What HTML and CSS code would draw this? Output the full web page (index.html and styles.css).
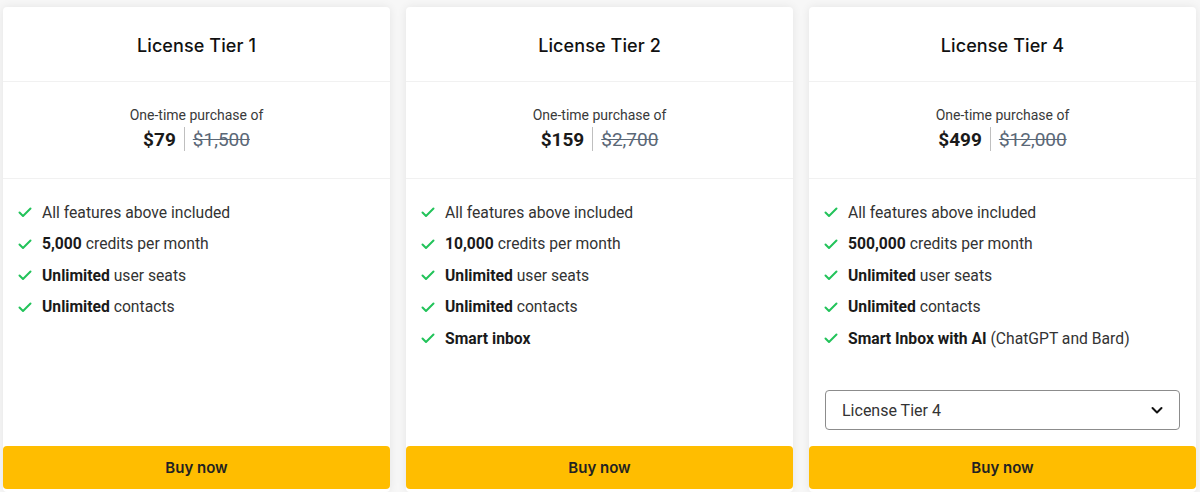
FILE: index.html
```html
<!DOCTYPE html>
<html>
<head>
<meta charset="utf-8">
<link rel="stylesheet" href="styles.css">
</head>
<body>
<div class="plans">
  <div class="card">
    <div class="head"><h2>License Tier 1</h2></div>
    <div class="price">
      <div class="note">One-time purchase of</div>
      <div class="amounts"><span class="now">$79</span><span class="sep"></span><span class="was">$1,500</span></div>
    </div>
    <ul class="features">
      <li><svg viewBox="0 0 16 16"><path d="M2.5 8.5l3.5 3.5 7.5-7.5"/></svg><span>All features above included</span></li>
      <li><svg viewBox="0 0 16 16"><path d="M2.5 8.5l3.5 3.5 7.5-7.5"/></svg><span><b>5,000</b> credits per month</span></li>
      <li><svg viewBox="0 0 16 16"><path d="M2.5 8.5l3.5 3.5 7.5-7.5"/></svg><span><b>Unlimited</b> user seats</span></li>
      <li><svg viewBox="0 0 16 16"><path d="M2.5 8.5l3.5 3.5 7.5-7.5"/></svg><span><b>Unlimited</b> contacts</span></li>
    </ul>
    <button class="buy">Buy now</button>
  </div>
  <div class="card">
    <div class="head"><h2>License Tier 2</h2></div>
    <div class="price">
      <div class="note">One-time purchase of</div>
      <div class="amounts"><span class="now">$159</span><span class="sep"></span><span class="was">$2,700</span></div>
    </div>
    <ul class="features">
      <li><svg viewBox="0 0 16 16"><path d="M2.5 8.5l3.5 3.5 7.5-7.5"/></svg><span>All features above included</span></li>
      <li><svg viewBox="0 0 16 16"><path d="M2.5 8.5l3.5 3.5 7.5-7.5"/></svg><span><b>10,000</b> credits per month</span></li>
      <li><svg viewBox="0 0 16 16"><path d="M2.5 8.5l3.5 3.5 7.5-7.5"/></svg><span><b>Unlimited</b> user seats</span></li>
      <li><svg viewBox="0 0 16 16"><path d="M2.5 8.5l3.5 3.5 7.5-7.5"/></svg><span><b>Unlimited</b> contacts</span></li>
      <li><svg viewBox="0 0 16 16"><path d="M2.5 8.5l3.5 3.5 7.5-7.5"/></svg><span><b>Smart inbox</b></span></li>
    </ul>
    <button class="buy">Buy now</button>
  </div>
  <div class="card">
    <div class="head"><h2>License Tier 4</h2></div>
    <div class="price">
      <div class="note">One-time purchase of</div>
      <div class="amounts"><span class="now">$499</span><span class="sep"></span><span class="was">$12,000</span></div>
    </div>
    <ul class="features">
      <li><svg viewBox="0 0 16 16"><path d="M2.5 8.5l3.5 3.5 7.5-7.5"/></svg><span>All features above included</span></li>
      <li><svg viewBox="0 0 16 16"><path d="M2.5 8.5l3.5 3.5 7.5-7.5"/></svg><span><b>500,000</b> credits per month</span></li>
      <li><svg viewBox="0 0 16 16"><path d="M2.5 8.5l3.5 3.5 7.5-7.5"/></svg><span><b>Unlimited</b> user seats</span></li>
      <li><svg viewBox="0 0 16 16"><path d="M2.5 8.5l3.5 3.5 7.5-7.5"/></svg><span><b>Unlimited</b> contacts</span></li>
      <li><svg viewBox="0 0 16 16"><path d="M2.5 8.5l3.5 3.5 7.5-7.5"/></svg><span><b>Smart Inbox with AI</b> (ChatGPT and Bard)</span></li>
    </ul>
    <div class="select">
      <span>License Tier 4</span>
      <svg viewBox="0 0 16 16"><path d="M3.5 6l4.5 4.5 4.5-4.5"/></svg>
    </div>
    <button class="buy">Buy now</button>
  </div>
</div>
</body>
</html>
```
FILE: styles.css
```css
* { box-sizing: border-box; }
html, body { margin: 0; padding: 0; }
body {
  background: #f7f7f7;
  font-family: Roboto, "Liberation Sans", sans-serif;
  color: #333;
  height: 492px;
  overflow: hidden;
}
.plans {
  display: grid;
  grid-template-columns: repeat(3, 387px);
  column-gap: 16px;
  padding: 7px 0 0 3px;
  height: 492px;
}
.card {
  background: #fff;
  border-radius: 4px;
  box-shadow: 0 0 10px rgba(0,0,0,0.08);
  display: flex;
  flex-direction: column;
  height: 485px;
}
.head {
  height: 75px;
  padding-top: 3px;
  display: flex;
  align-items: center;
  justify-content: center;
  border-bottom: 1px solid #f1f1f1;
}
.head h2 {
  margin: 0;
  font-family: Inter, Roboto, sans-serif;
  font-weight: 500;
  font-size: 18px;
  color: #111;
  letter-spacing: 0.1px;
}
.price {
  height: 97px;
  border-bottom: 1px solid #f1f1f1;
  display: flex;
  flex-direction: column;
  align-items: center;
  padding-top: 24px;
}
.note {
  font-size: 14px;
  color: #3a3a3a;
  line-height: 18px;
}
.amounts {
  display: flex;
  align-items: center;
  margin-top: 2px;
  height: 26px;
}
.now {
  font-weight: 700;
  font-size: 19px;
  color: #1a1a1a;
}
.sep {
  width: 1px;
  height: 24px;
  background: #bfbfbf;
  margin: 0 8px;
}
.was {
  font-size: 19px;
  color: #5b6877;
  text-decoration: line-through;
}
.features {
  list-style: none;
  margin: 0;
  padding: 21px 16px 0 14px;
  display: flex;
  flex-direction: column;
  gap: 7.5px;
}
.features li {
  display: flex;
  align-items: center;
  height: 24px;
  font-size: 15.7px;
  color: #333;
}
.features b { font-weight: 700; color: #1a1a1a; }
.features svg {
  width: 16px;
  height: 16px;
  margin-right: 9px;
  fill: none;
  stroke: #22c35a;
  stroke-width: 2;
  stroke-linecap: round;
  stroke-linejoin: round;
}
.select {
  margin: 40px 16px 0 16px;
  height: 40px;
  border: 1px solid #8c8c8c;
  border-radius: 4px;
  display: flex;
  align-items: center;
  justify-content: space-between;
  padding: 0 14px 0 16px;
  font-size: 16px;
  color: #333;
}
.select svg {
  width: 16px;
  height: 16px;
  fill: none;
  stroke: #111;
  stroke-width: 2;
  stroke-linecap: round;
  stroke-linejoin: round;
}
.buy {
  margin-top: auto;
  margin-bottom: 3px;
  height: 43px;
  border: 0;
  border-radius: 4px;
  background: #ffbd00;
  font-family: Inter, Roboto, sans-serif;
  font-weight: 600;
  font-size: 15px;
  color: #222;
  width: 100%;
}
```
